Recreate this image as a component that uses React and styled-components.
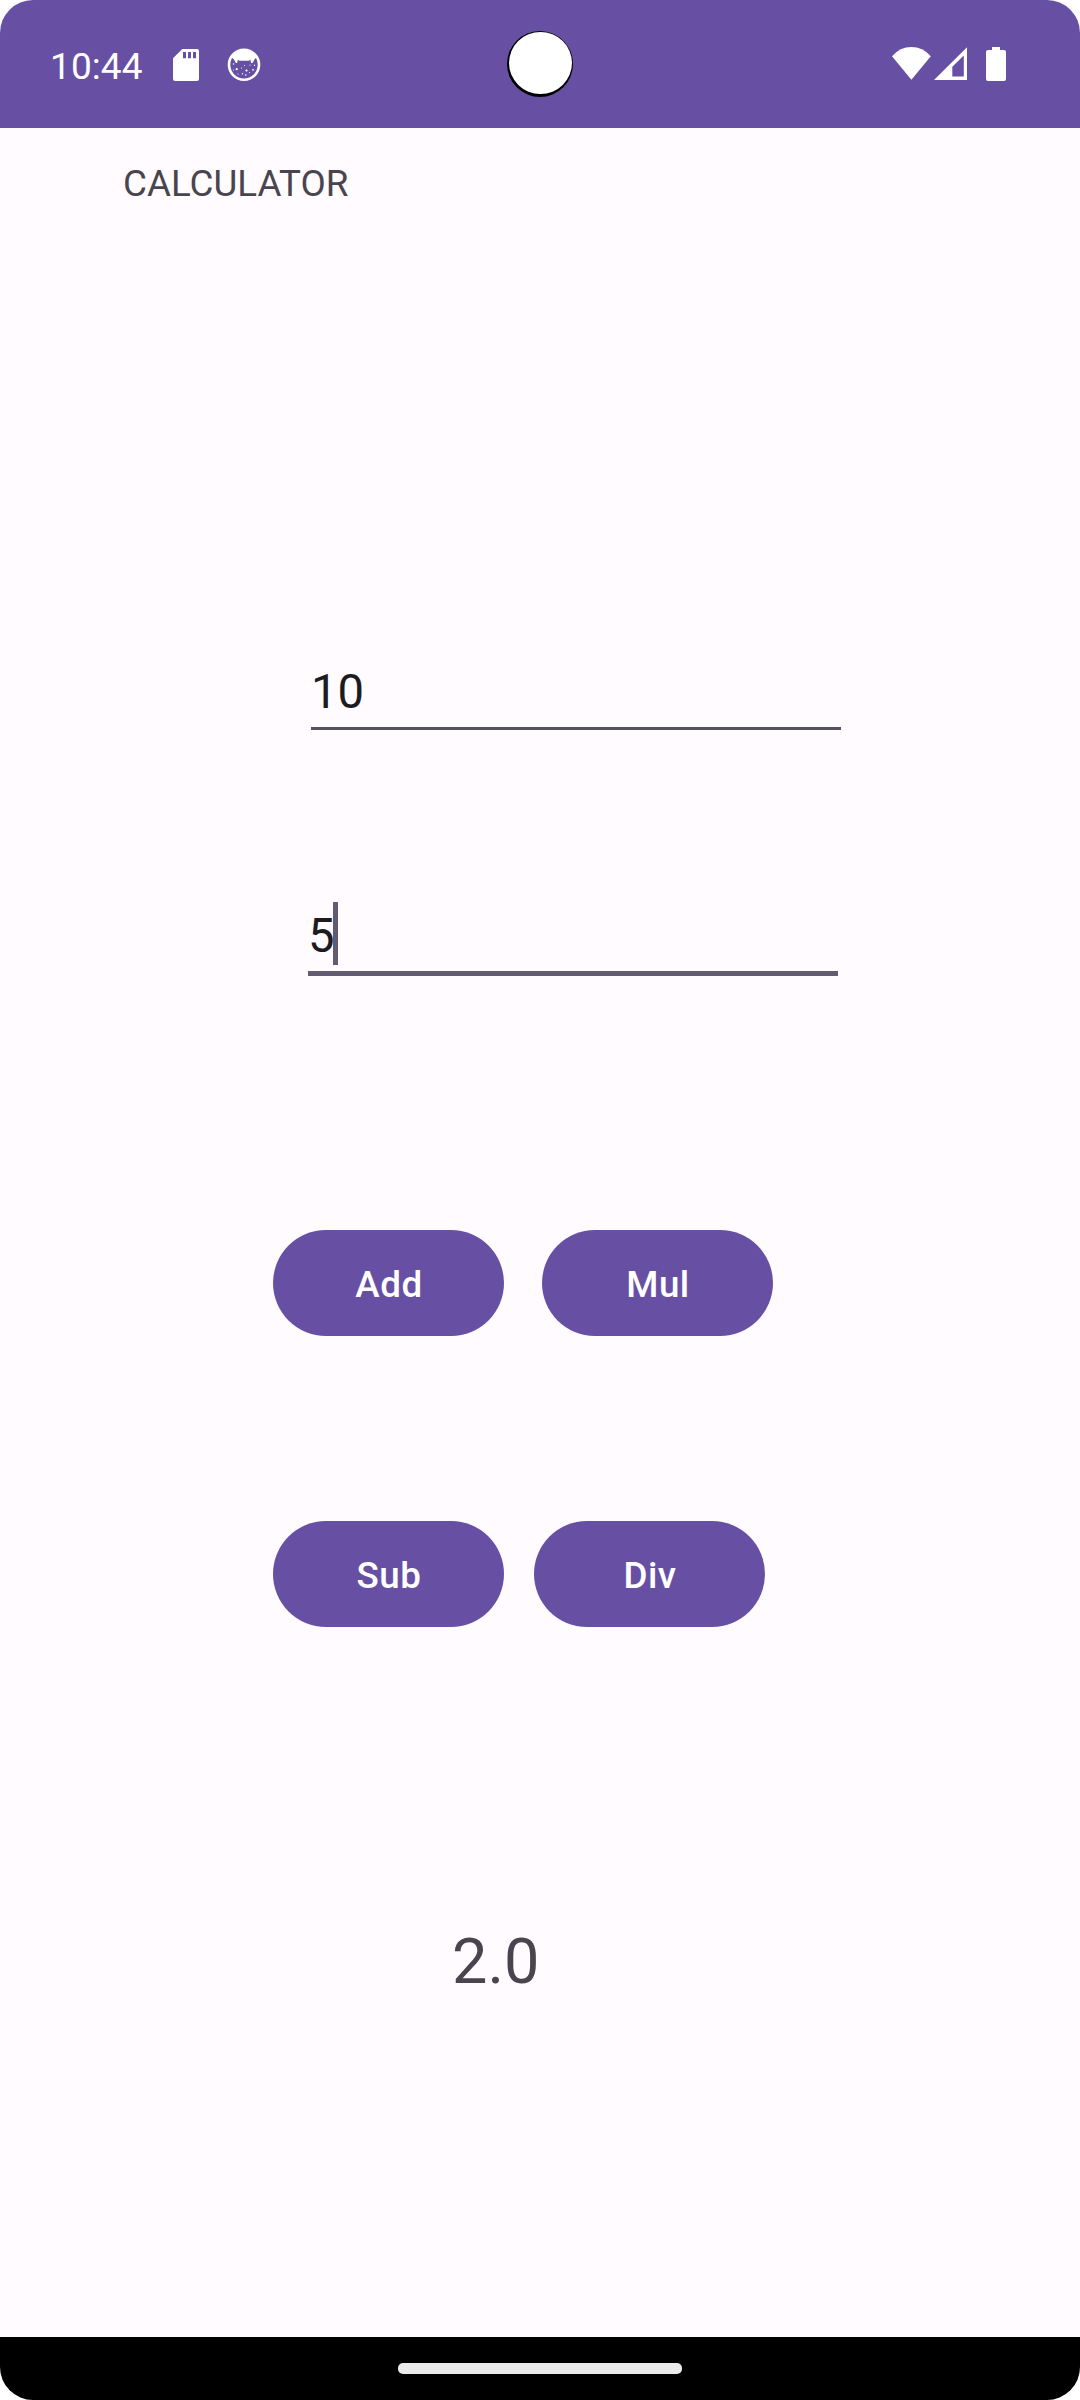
import React from "react";
import styled, { createGlobalStyle } from "styled-components";

const GlobalStyle = createGlobalStyle`
  * { box-sizing: border-box; }
  body { margin: 0; background: #fff; }
`;

const Screen = styled.div`
  display: flex;
  flex-direction: column;
  width: 1080px;
  height: 2400px;
  overflow: hidden;
  border-radius: 33px;
  background: #fffbff;
  color: #49454f;
  font-family: Roboto, "Liberation Sans", sans-serif;
`;

const StatusBar = styled.header`
  position: relative;
  display: flex;
  justify-content: space-between;
  height: 128px;
  padding: 45px 73px 0 50px;
  background: #6750a4;
  color: #fff;
`;

const StatusGroup = styled.div`
  display: flex;
  align-items: flex-start;
`;

const Clock = styled.span`
  width: 122px;
  font-size: 37px;
  line-height: 43px;
  letter-spacing: 0.1px;
`;

const Glyph = styled.svg`
  display: block;
  width: ${(p) => p.$width}px;
  height: 40px;
  margin-right: ${(p) => p.$gap || 0}px;
  fill: currentColor;
`;

const Camera = styled.div`
  position: absolute;
  left: 507px;
  top: 31px;
  width: 66px;
  height: 66px;
  border-radius: 50%;
  background: #000;
  padding: 1px 0 0 2px;

  &::before {
    content: "";
    display: block;
    width: 63px;
    height: 62px;
    border-radius: 50%;
    background: #fff;
  }
`;

const Content = styled.main`
  flex: 1;
  display: flex;
  flex-direction: column;
  align-items: flex-start;
`;

const Title = styled.h1`
  margin: 34px 0 0 123px;
  font-size: 36.75px;
  font-weight: 400;
  line-height: 43px;
`;

const Field = styled.div`
  display: flex;
  align-items: center;
  width: 530px;
  height: ${(p) => (p.$focused ? 74 : 70)}px;
  margin: ${(p) => p.$margin};
  padding: 0 0 ${(p) => (p.$focused ? 2 : 4)}px;
  border-bottom: ${(p) => (p.$focused ? 5 : 3)}px solid ${(p) => (p.$focused ? "#625b71" : "#575260")};
  color: #1c1b1f;
  font-size: 47.25px;
  line-height: 56px;
`;

const Caret = styled.span`
  width: 5px;
  height: 63px;
  margin: 0 0 4px -2px;
  background: #625b71;
`;

const ButtonRow = styled.div`
  display: flex;
  gap: ${(p) => p.$gap}px;
  margin: ${(p) => p.$top}px 0 0 273px;
`;

const Button = styled.button`
  width: 231px;
  height: 106px;
  padding: 2px 0 0 1px;
  border: 0;
  border-radius: 53px;
  background: #6750a4;
  color: #fff;
  font: 500 36.75px/43px Roboto, "Liberation Sans", sans-serif;
  letter-spacing: 0.5px;
`;

const Result = styled.output`
  margin: 298px 0 0 452px;
  font-size: 63px;
  line-height: 74px;
`;

const NavBar = styled.footer`
  display: flex;
  justify-content: center;
  height: 63px;
  padding-top: 26px;
  background: #000;
`;

const Handle = styled.div`
  width: 284px;
  height: 11px;
  border-radius: 5px;
  background: #ebebeb;
`;

const SdCardIcon = () => (
  <Glyph $width={27} $gap={28} viewBox="172 45 27 40">
    <path
      fillRule="evenodd"
      d="M182.3 49H197q2 0 2 2V79q0 2-2 2H175q-2 0-2-2V58.3ZM183 52v6.3h3V52ZM188 52v6.3h3V52ZM193 52v6.3h3V52Z"
    />
  </Glyph>
);

const CatIcon = () => (
  <Glyph $width={34} viewBox="227 45 34 40">
    <circle cx="244" cy="64.8" r="15" fill="none" stroke="currentColor" strokeWidth="2.6" />
    <path d="M231 57 Q236 49.5 244 49.5 T257 57 L254.8 59 252.5 63 251 63 250.5 59.8 248.5 60.8H239.5L237.8 59.8 237.2 63 235.8 63 234 59.5Z" />
    <g>
      <circle cx="233.5" cy="64" r=".7" />
      <circle cx="236.7" cy="69.2" r="1.1" />
      <circle cx="238" cy="74" r=".6" />
      <circle cx="241.5" cy="68" r=".6" />
      <circle cx="244.5" cy="65.5" r=".6" />
      <circle cx="246.5" cy="70.5" r="1.1" />
      <circle cx="250" cy="65" r=".6" />
      <circle cx="253" cy="69.8" r=".9" />
      <circle cx="254.5" cy="65.3" r=".7" />
      <circle cx="242.5" cy="73.7" r=".7" />
      <circle cx="245.8" cy="75" r=".8" />
      <circle cx="249.5" cy="72.5" r=".6" />
      <circle cx="233.5" cy="70" r=".6" />
    </g>
  </Glyph>
);

const WifiIcon = () => (
  <Glyph $width={39} $gap={3} viewBox="892 45 39 40">
    <path d="M892 56.2Q900 47 911.4 47T930.8 56.2L911.4 79.8Z" />
  </Glyph>
);

const SignalIcon = () => (
  <Glyph $width={33} $gap={19} viewBox="934 45 33 40">
    <path fillRule="evenodd" d="M934 80 967 47.2V80ZM952.3 66.7V76.4H963.8V55.5Z" />
  </Glyph>
);

const BatteryIcon = () => (
  <Glyph $width={21} viewBox="986 45 21 40">
    <path d="M992 47h8v3h4q2 0 2 2V79q0 2-2 2H988q-2 0-2-2V52q0-2 2-2h4Z" />
  </Glyph>
);

export default function App() {
  return (
    <>
      <GlobalStyle />
      <Screen>
        <StatusBar>
          <StatusGroup>
            <Clock>10:44</Clock>
            <SdCardIcon />
            <CatIcon />
          </StatusGroup>
          <Camera />
          <StatusGroup>
            <WifiIcon />
            <SignalIcon />
            <BatteryIcon />
          </StatusGroup>
        </StatusBar>
        <Content>
          <Title>CALCULATOR</Title>
          <Field $margin="455px 0 0 311px">10</Field>
          <Field $focused $margin="172px 0 0 308px">
            5<Caret />
          </Field>
          <ButtonRow $top={254} $gap={38}>
            <Button>Add</Button>
            <Button>Mul</Button>
          </ButtonRow>
          <ButtonRow $top={185} $gap={30}>
            <Button>Sub</Button>
            <Button>Div</Button>
          </ButtonRow>
          <Result>2.0</Result>
        </Content>
        <NavBar>
          <Handle />
        </NavBar>
      </Screen>
    </>
  );
}
